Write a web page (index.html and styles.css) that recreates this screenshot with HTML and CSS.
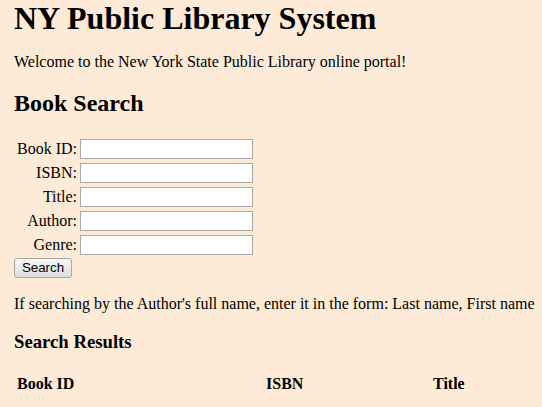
FILE: index.html
```html
<!DOCTYPE html>
<html>
<head>
<meta charset="utf-8">
<title>NY Public Library System</title>
<link rel="stylesheet" href="styles.css">
</head>
<body>
<h1 class="title">NY Public Library System</h1>
<p class="welcome">Welcome to the New York State Public Library online portal!</p>
<h2 class="section">Book Search</h2>
<form class="search-form">
  <div class="fields">
    <label class="lbl" for="bookid">Book ID:</label><input class="field" id="bookid" type="text">
    <label class="lbl" for="isbn">ISBN:</label><input class="field" id="isbn" type="text">
    <label class="lbl" for="title">Title:</label><input class="field" id="title" type="text">
    <label class="lbl" for="author">Author:</label><input class="field" id="author" type="text">
    <label class="lbl" for="genre">Genre:</label><input class="field" id="genre" type="text">
  </div>
  <button class="btn" type="button">Search</button>
</form>
<p class="hint">If searching by the Author's full name, enter it in the form: Last name, First name</p>
<h3 class="results-title">Search Results</h3>
<table class="results">
  <thead>
    <tr><th class="col-id">Book ID</th><th class="col-isbn">ISBN</th><th class="col-title">Title</th></tr>
  </thead>
</table>
</body>
</html>
```

FILE: styles.css
```css
html {
  background: #fdebd8;
}
body {
  margin: 0;
  padding: 0 0 0 14px;
  font-family: "Liberation Serif", "Times New Roman", serif;
  font-size: 16px;
  color: #000;
  background: #fdebd8;
  overflow: hidden;
}
.title {
  font-size: 32px;
  font-weight: bold;
  margin: 0 0 16px;
}
.welcome {
  margin: 0;
}
.section {
  font-size: 24px;
  font-weight: bold;
  margin: 19px 0 19px;
}
.search-form {
  margin: 0;
}
.fields {
  display: grid;
  grid-template-columns: auto auto;
  justify-content: start;
  column-gap: 3px;
  row-gap: 4px;
  padding: 3px 0 3px 3px;
}
.lbl {
  text-align: right;
  align-self: center;
  line-height: normal;
}
.field {
  display: block;
  box-sizing: border-box;
  width: 173px;
  height: 20px;
  margin: 0;
  padding: 1px 2px;
  border: 1px solid #a9a9a9;
  background: #fff;
  font-family: "Liberation Sans", Arial, sans-serif;
  font-size: 13.33px;
}
.btn {
  display: block;
  box-sizing: border-box;
  height: 20px;
  width: 58px;
  margin: 0;
  padding: 0 6px;
  border: 1px solid #a6a6a6;
  border-radius: 3px;
  background: linear-gradient(#f7f7f7, #dddddd);
  font-family: "Liberation Sans", Arial, sans-serif;
  font-size: 13.33px;
  color: #000;
  line-height: 16px;
}
.hint {
  margin: 17px 0 0;
  white-space: nowrap;
}
.results-title {
  font-size: 18.72px;
  font-weight: bold;
  margin: 18px 0 18.72px;
}
.results {
  border-spacing: 2px;
  margin: 0;
}
.results th {
  padding: 1px;
  text-align: left;
  font-weight: bold;
}
.col-id {
  width: 245px;
}
.col-isbn {
  width: 163px;
}
.col-title {
  width: 90px;
}
```
